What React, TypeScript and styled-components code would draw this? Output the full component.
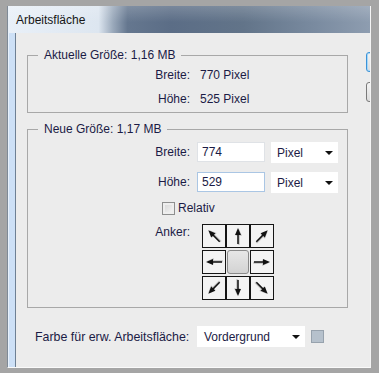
import styled, { createGlobalStyle } from "styled-components";

const GlobalStyle = createGlobalStyle`
  html, body {
    margin: 0;
    padding: 0;
    background: #a5a5a5;
    overflow: hidden;
  }
  body {
    font-family: "Liberation Sans", Arial, sans-serif;
    font-size: 12px;
    color: #1b1b45;
  }
`;

const ARROWS = [315, 0, 45, 270, null, 90, 225, 180, 135];

function Arrow({ angle }: { angle: number }) {
  return (
    <svg width="22" height="22" viewBox="0 0 22 22">
      <g transform={`rotate(${angle} 11 11)`}>
        <g transform="translate(0.8 0.8)" opacity="0.3">
          <line x1="11" y1="19" x2="11" y2="8" stroke="#555" strokeWidth="2" />
          <polygon points="11,3 7.8,10 14.2,10" fill="#555" />
        </g>
        <line x1="11" y1="19" x2="11" y2="8" stroke="#111" strokeWidth="1.5" />
        <polygon points="11,3 8,10 14,10" fill="#111" />
      </g>
    </svg>
  );
}

function App() {
  return (
    <>
      <GlobalStyle />
      <Frame>
        <Window>
          <TitleBar>Arbeitsfläche</TitleBar>
          <Body>
            <Strip />
            <Content>
              <Main>
                <Group>
                  <Legend>Aktuelle Größe: 1,16 MB</Legend>
                  <CurrentGrid>
                    <Label>Breite:</Label>
                    <Value>770 Pixel</Value>
                    <Label>Höhe:</Label>
                    <Value>525 Pixel</Value>
                  </CurrentGrid>
                </Group>

                <Group $gap={9}>
                  <Legend>Neue Größe: 1,17 MB</Legend>
                  <NewGrid>
                    <Label>Breite:</Label>
                    <Controls>
                      <Field defaultValue="774" readOnly />
                      <SelectBox $width={67}>Pixel</SelectBox>
                    </Controls>
                    <Label>Höhe:</Label>
                    <Controls>
                      <Field defaultValue="529" readOnly $focus />
                      <SelectBox $width={67}>Pixel</SelectBox>
                    </Controls>
                    <CheckRow>
                      <CheckBox />
                      <span>Relativ</span>
                    </CheckRow>
                    <TopLabel>Anker:</TopLabel>
                    <AnchorGrid>
                      {ARROWS.map((a, i) => (
                        <AnchorCell key={i} $active={a === null}>
                          {a !== null && <Arrow angle={a} />}
                        </AnchorCell>
                      ))}
                    </AnchorGrid>
                  </NewGrid>
                </Group>

                <Footer>
                  <FooterLabel>Farbe für erw. Arbeitsfläche:</FooterLabel>
                  <SelectBox $width={108} $pad={7}>
                    Vordergrund
                  </SelectBox>
                  <Swatch />
                </Footer>
              </Main>

              <ButtonCol>
                <StubButton $primary />
                <StubButton />
              </ButtonCol>
            </Content>
          </Body>
        </Window>
      </Frame>
    </>
  );
}
export default App;

const Frame = styled.div`
  width: 379px;
  height: 373px;
  box-sizing: border-box;
  background: #a5a5a5;
  padding: 6px 8px 5px 7px;
  display: flex;
  overflow: hidden;
`;

const Window = styled.div`
  flex: 1;
  min-width: 0;
  display: flex;
  flex-direction: column;
  border-left: 1px solid #7f8a96;
  border-right: 1px solid #f4f4f4;
  border-bottom: 1px solid #fafafa;
`;

const TitleBar = styled.div`
  height: 27px;
  flex-shrink: 0;
  display: flex;
  align-items: center;
  padding-left: 8px;
  padding-top: 1px;
  box-sizing: border-box;
  color: #161616;
  font-size: 12px;
  background: linear-gradient(
      to bottom,
      rgba(255, 255, 255, 0.18),
      rgba(255, 255, 255, 0) 60%
    ),
    linear-gradient(
      to right,
      #e9f0f8 0%,
      #dde6f0 25%,
      #9aa9bb 29%,
      #65778f 33%,
      #5b6d86 45%,
      #627489 65%,
      #7a8ba0 85%,
      #8e9db0 100%
    );
`;

const Body = styled.div`
  flex: 1;
  display: flex;
  min-height: 0;
  min-width: 0;
`;

const Strip = styled.div`
  width: 6px;
  flex-shrink: 0;
  background: #cde0f6;
  border-left: 1px solid #e8f1fb;
  border-right: 1px solid #6e8094;
`;

const Content = styled.div`
  flex: 1;
  min-width: 0;
  display: flex;
  overflow: hidden;
  background: #ececec;
  padding: 15px 0 0 11px;
`;

const Main = styled.div`
  width: 321px;
  flex-shrink: 0;
  display: flex;
  flex-direction: column;
`;

const Group = styled.fieldset<{ $gap?: number }>`
  margin: ${(p) => p.$gap ?? 0}px 0 0;
  padding: 0;
  min-width: 0;
  border: 1px solid #a8a8a8;
`;

const Legend = styled.legend`
  margin-left: 10px;
  padding: 0 6px;
  line-height: 14px;
  font-size: 12px;
`;

const CurrentGrid = styled.div`
  display: grid;
  grid-template-columns: 162px auto;
  column-gap: 10px;
  grid-auto-rows: 24px;
  align-items: center;
  padding: 1px 0 1px;
`;

const Label = styled.div`
  text-align: right;
  line-height: 20px;
`;

const TopLabel = styled(Label)`
  line-height: 14px;
  padding-top: 1px;
`;

const Value = styled.div``;

const NewGrid = styled.div`
  display: grid;
  grid-template-columns: 162px auto;
  grid-template-rows: 21px 21px 13px auto;
  column-gap: 7px;
  row-gap: 9px;
  align-items: start;
  padding: 6px 0 7px;
`;

const Controls = styled.div`
  display: flex;
  gap: 6px;
`;

const Field = styled.input<{ $focus?: boolean }>`
  width: 68px;
  height: 20px;
  box-sizing: border-box;
  margin: 0;
  padding: 0 4px;
  border: 1px solid ${(p) => (p.$focus ? "#aac6e4" : "#dfe2e6")};
  background: #fff;
  font-family: "Liberation Sans", Arial, sans-serif;
  font-size: 12px;
  color: #1b1b45;
  outline: none;
`;

const SelectBox = styled.div<{ $width: number; $pad?: number }>`
  width: ${(p) => p.$width}px;
  height: 21px;
  flex-shrink: 0;
  box-sizing: border-box;
  display: flex;
  align-items: center;
  padding: 1px 5px 0 ${(p) => p.$pad ?? 6}px;
  background: #fff;
  &::after {
    content: "";
    margin-left: auto;
    border-left: 4px solid transparent;
    border-right: 4px solid transparent;
    border-top: 4px solid #111;
  }
`;

const CheckRow = styled.div`
  grid-column: 1 / -1;
  display: flex;
  align-items: center;
  gap: 3px;
  padding-left: 134px;
  line-height: 13px;
`;

const CheckBox = styled.span`
  width: 13px;
  height: 13px;
  box-sizing: border-box;
  border: 1px solid #8e8f8f;
  background: linear-gradient(135deg, #d4d4d4, #f7f7f7);
  box-shadow: inset 0 0 0 2px #eeeeee;
`;

const AnchorGrid = styled.div`
  margin-left: 5px;
  display: grid;
  grid-template-columns: repeat(3, 24px);
  grid-template-rows: repeat(3, 24px);
  row-gap: 2px;
`;

const AnchorCell = styled.div<{ $active?: boolean }>`
  box-sizing: border-box;
  display: flex;
  align-items: center;
  justify-content: center;
  border: 1px solid ${(p) => (p.$active ? "#8a8a8a" : "#151515")};
  border-radius: ${(p) => (p.$active ? "3px" : "0")};
  background: ${(p) =>
    p.$active ? "linear-gradient(#e7e7e7, #d3d3d3)" : "#f3f3f3"};
  ${(p) => (p.$active ? "margin: 0 1px;" : "")}
`;

const Footer = styled.div`
  display: flex;
  align-items: center;
  margin-top: 18px;
  padding-left: 8px;
`;

const FooterLabel = styled.div`
  width: 162px;
  font-size: 12.4px;
`;

const Swatch = styled.div`
  width: 13px;
  height: 13px;
  box-sizing: border-box;
  margin-left: 6px;
  border: 1px solid #97a2ad;
  background: #b6c1cc;
`;

const ButtonCol = styled.div`
  margin-left: 18px;
  padding-top: 4px;
  display: flex;
  flex-direction: column;
  gap: 10px;
`;

const StubButton = styled.div<{ $primary?: boolean }>`
  width: 80px;
  height: 18px;
  flex-shrink: 0;
  border-radius: 3px;
  border: 1px solid ${(p) => (p.$primary ? "#3c93d8" : "#7a7a7a")};
  background: linear-gradient(#f4f4f4, #dcdcdc);
  box-shadow: ${(p) => (p.$primary ? "inset 0 0 0 1px #a8d8f8" : "none")};
`;
